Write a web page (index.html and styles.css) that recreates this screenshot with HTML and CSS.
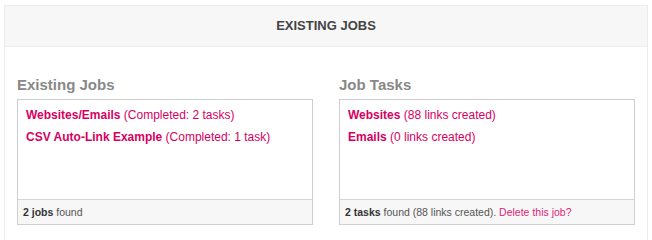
FILE: index.html
```html
<!DOCTYPE html>
<html>
<head>
<meta charset="utf-8">
<link rel="stylesheet" href="styles.css">
</head>
<body>
<div class="panel">
  <div class="panel-header">EXISTING JOBS</div>
  <div class="panel-body">
    <div class="col">
      <h2 class="col-title">Existing Jobs</h2>
      <div class="box">
        <ul class="list">
          <li><a href="#"><b>Websites/Emails</b> (Completed: 2 tasks)</a></li>
          <li><a href="#"><b>CSV Auto-Link Example</b> (Completed: 1 task)</a></li>
        </ul>
        <div class="box-footer"><b>2 jobs</b> found</div>
      </div>
    </div>
    <div class="col">
      <h2 class="col-title">Job Tasks</h2>
      <div class="box">
        <ul class="list">
          <li><a href="#"><b>Websites</b> (88 links created)</a></li>
          <li><a href="#"><b>Emails</b> (0 links created)</a></li>
        </ul>
        <div class="box-footer"><b>2 tasks</b> found (88 links created). <a href="#" class="delete">Delete this job?</a></div>
      </div>
    </div>
  </div>
</div>
</body>
</html>
```
FILE: styles.css
```css
html, body {
  margin: 0;
  padding: 0;
  background: #fff;
}
body {
  font-family: "Liberation Sans", Arial, sans-serif;
  padding: 5px 4px 0 4px;
}
.panel {
  border: 1px solid #ececec;
  border-bottom: none;
  height: 240px;
}
.panel-header {
  background: #f7f7f7;
  border-bottom: 1px solid #ececec;
  height: 40px;
  line-height: 40px;
  text-align: center;
  font-weight: bold;
  font-size: 13px;
  color: #444;
}
.panel-body {
  display: grid;
  grid-template-columns: 296px 296px;
  column-gap: 26px;
  padding: 29px 13px 0 12px;
}
.col-title {
  margin: 0 0 5px 0;
  font-size: 15px;
  line-height: 18px;
  font-weight: bold;
  color: #888;
}
.box {
  border: 1px solid #cfcfcf;
  height: 124px;
  display: flex;
  flex-direction: column;
}
.list {
  list-style: none;
  margin: 0;
  padding: 4px 8px 0 8px;
  flex: 1;
}
.list li {
  font-size: 12px;
  line-height: 22px;
}
.list a {
  color: #d6005f;
  text-decoration: none;
}
.box-footer {
  background: #f7f7f7;
  border-top: 1px solid #d6d6d6;
  height: 24px;
  line-height: 24px;
  padding: 0 5px;
  font-size: 10.5px;
  color: #555;
}
.box-footer b {
  color: #333;
}
.box-footer .delete {
  color: #e0267a;
  text-decoration: none;
}
```
